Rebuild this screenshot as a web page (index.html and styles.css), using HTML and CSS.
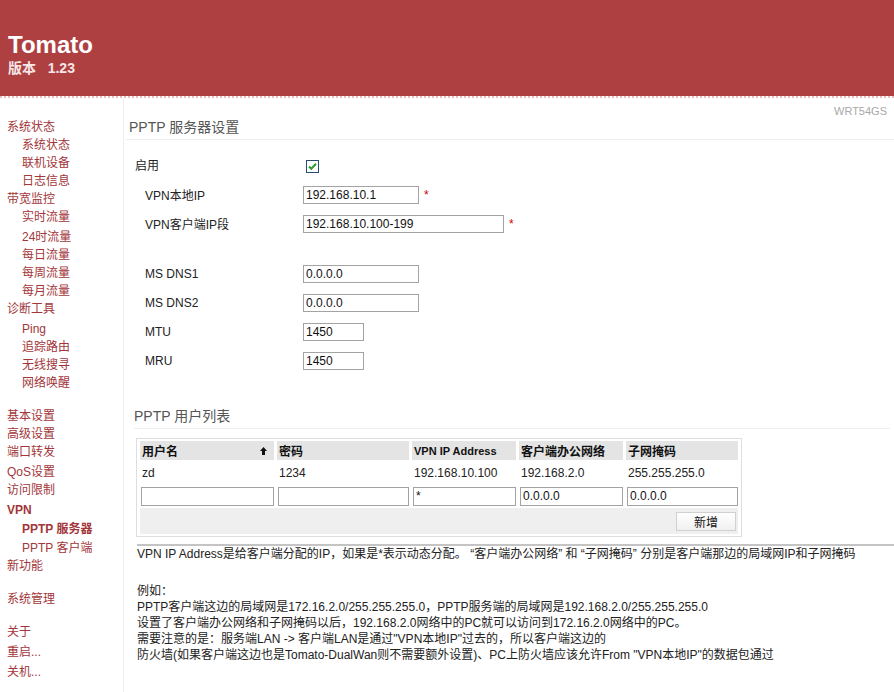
FILE: index.html
```html
<!DOCTYPE html>
<html lang="zh-CN">
<head>
    <meta charset="UTF-8">
    <title>[Tomato] VPN: PPTP 服务器</title>
    <link rel="stylesheet" href="styles.css">
</head>
<body>
    <div id="header">
        <div class="title">Tomato</div>
        <div class="version">版本&nbsp;&nbsp;&nbsp;1.23</div>
    </div>
    <div class="header-edge"></div>

    <div class="page">
        <div id="navi">
            <a class="top" href="#">系统状态</a>
            <a class="sub" href="#">系统状态</a>
            <a class="sub" href="#">联机设备</a>
            <a class="sub" href="#">日志信息</a>
            <a class="top" href="#">带宽监控</a>
            <a class="sub" href="#">实时流量</a>
            <a class="sub tall" href="#">24时流量</a>
            <a class="sub" href="#">每日流量</a>
            <a class="sub" href="#">每周流量</a>
            <a class="sub" href="#">每月流量</a>
            <a class="top" href="#">诊断工具</a>
            <a class="sub tall" href="#">Ping</a>
            <a class="sub" href="#">追踪路由</a>
            <a class="sub" href="#">无线搜寻</a>
            <a class="sub" href="#">网络唤醒</a>

            <a class="top gap" href="#">基本设置</a>
            <a class="top" href="#">高级设置</a>
            <a class="top" href="#">端口转发</a>
            <a class="top tall" href="#">QoS设置</a>
            <a class="top" href="#">访问限制</a>
            <a class="top tall active" href="#">VPN</a>
            <a class="sub half active" href="#">PPTP 服务器</a>
            <a class="sub half" href="#">PPTP 客户端</a>
            <a class="top" href="#">新功能</a>

            <a class="top gap" href="#">系统管理</a>

            <a class="top gap" href="#">关于</a>
            <a class="top tall" href="#">重启...</a>
            <a class="top tall" href="#">关机...</a>
        </div>

        <div id="content">
            <div class="ident">WRT54GS</div>

            <div class="section-title">PPTP 服务器设置</div>
            <div class="section">
                <div class="row row-enable">
                    <label class="lbl">启用</label>
                    <span class="check">
                        <svg width="13" height="13" viewBox="0 0 13 13">
                            <rect x="0.5" y="0.5" width="12" height="12" fill="#fff" stroke="#2a4d6e"/>
                            <path d="M3 6.5 L5.3 8.8 L10 3.8" fill="none" stroke="#2f9e2f" stroke-width="2"/>
                        </svg>
                    </span>
                </div>
                <div class="row">
                    <label class="lbl indent">VPN本地IP</label>
                    <input type="text" class="field w-ip" value="192.168.10.1"><span class="req">*</span>
                </div>
                <div class="row">
                    <label class="lbl indent">VPN客户端IP段</label>
                    <input type="text" class="field w-range" value="192.168.10.100-199"><span class="req">*</span>
                </div>
                <div class="spacer"></div>
                <div class="row">
                    <label class="lbl indent">MS DNS1</label>
                    <input type="text" class="field w-ip" value="0.0.0.0">
                </div>
                <div class="row">
                    <label class="lbl indent">MS DNS2</label>
                    <input type="text" class="field w-ip" value="0.0.0.0">
                </div>
                <div class="row">
                    <label class="lbl indent">MTU</label>
                    <input type="text" class="field w-num" value="1450">
                </div>
                <div class="row">
                    <label class="lbl indent">MRU</label>
                    <input type="text" class="field w-num" value="1450">
                </div>
            </div>

            <div class="section-title list-title">PPTP 用户列表</div>
            <table class="users">
                <tr>
                    <th class="c1">用户名
                        <svg class="sort" width="7" height="8" viewBox="0 0 7 8"><path d="M3.5 0 L7 4 H5 V8 H2 V4 H0 Z" fill="#111"/></svg>
                    </th>
                    <th class="c2">密码</th>
                    <th class="c3">VPN IP Address</th>
                    <th class="c4">客户端办公网络</th>
                    <th class="c5">子网掩码</th>
                </tr>
                <tr class="data">
                    <td>zd</td>
                    <td>1234</td>
                    <td>192.168.10.100</td>
                    <td>192.168.2.0</td>
                    <td>255.255.255.0</td>
                </tr>
                <tr class="edit">
                    <td><input type="text" class="cell-input"></td>
                    <td><input type="text" class="cell-input"></td>
                    <td><input type="text" class="cell-input" value="*"></td>
                    <td><input type="text" class="cell-input" value="0.0.0.0"></td>
                    <td><input type="text" class="cell-input" value="0.0.0.0"></td>
                </tr>
                <tr class="foot">
                    <td colspan="5"><button type="button" class="add-btn">新增</button></td>
                </tr>
            </table>

            <div class="notes">
                <div>VPN IP Address是给客户端分配的IP，如果是*表示动态分配。 “客户端办公网络” 和 “子网掩码” 分别是客户端那边的局域网IP和子网掩码</div>
                <div class="example">
                    例如：<br>
                    PPTP客户端这边的局域网是172.16.2.0/255.255.255.0，PPTP服务端的局域网是192.168.2.0/255.255.255.0<br>
                    设置了客户端办公网络和子网掩码以后，192.168.2.0网络中的PC就可以访问到172.16.2.0网络中的PC。<br>
                    需要注意的是：服务端LAN -&gt; 客户端LAN是通过"VPN本地IP"过去的，所以客户端这边的<br>
                    防火墙(如果客户端这边也是Tomato-DualWan则不需要额外设置)、PC上防火墙应该允许From "VPN本地IP"的数据包通过
                </div>
            </div>
        </div>
    </div>
</body>
</html>
```

FILE: styles.css
```css
body {
    margin: 0;
    font-family: "Liberation Sans", "Noto Sans CJK SC", sans-serif;
    font-size: 12px;
    color: #222;
    background-color: #fff;
    overflow: hidden;
}

/* red banner */
#header {
    height: 96px;
    box-sizing: border-box;
    padding: 31px 0 0 8px;
    background-color: #ae4042;
    color: #fff;
}

#header .title {
    font-size: 24px;
    font-weight: bold;
    line-height: 28px;
}

#header .version {
    margin-top: 1px;
    font-size: 14px;
    font-weight: bold;
    line-height: 16px;
    color: #f6e6e6;
}

.header-edge {
    height: 2px;
    background: repeating-linear-gradient(90deg, #e7bdbd 0 2px, #fff 2px 4px);
}

.page {
    display: flex;
}

/* left menu */
#navi {
    width: 124px;
    min-height: 594px;
    padding-top: 20px;
    box-sizing: border-box;
    border-right: 1px solid #eeeeee;
    flex-shrink: 0;
}

#navi a {
    display: block;
    line-height: 18px;
    color: #a2363a;
    text-decoration: none;
    white-space: nowrap;
}

#navi a.top {
    padding-left: 7px;
}

#navi a.sub {
    padding-left: 22px;
}

#navi a.tall {
    padding-top: 2px;
}

#navi a.half {
    padding-top: 1px;
}

#navi a.gap {
    margin-top: 15px;
}

#navi a.active {
    font-weight: bold;
}

/* right side */
#content {
    flex: 1;
    min-width: 0;
}

.ident {
    margin-top: 6px;
    padding-right: 7px;
    text-align: right;
    font-size: 11px;
    line-height: 14px;
    color: #a8a8a8;
}

.section-title {
    margin-left: 2px;
    padding: 0 0 3px 3px;
    font-size: 14px;
    line-height: 18px;
    color: #555;
    border-bottom: 1px solid #eeeeee;
}

.section {
    padding: 8px 0 0 11px;
}

.row {
    display: flex;
    align-items: center;
    height: 29px;
}

.row-enable {
    height: 32px;
}

.lbl {
    width: 168px;
    flex-shrink: 0;
    box-sizing: border-box;
    color: #222;
}

.lbl.indent {
    padding-left: 10px;
}

.check {
    display: flex;
    margin: 4px 0 0 3px;
}

.spacer {
    height: 21px;
}

.field {
    height: 18px;
    box-sizing: border-box;
    margin: 0;
    padding: 0 2px;
    border: 1px solid #a3a3a3;
    font-family: "Liberation Sans", sans-serif;
    font-size: 12px;
    color: #111;
    background-color: #fff;
}

.w-ip {
    width: 116px;
}

.w-range {
    width: 201px;
}

.w-num {
    width: 61px;
}

.req {
    margin-left: 5px;
    color: #d40000;
}

.list-title {
    margin: 32px 4px 0 10px;
    padding-left: 0;
}

/* users table */
table.users {
    margin: 9px 0 0 12px;
    border: 1px solid #dedede;
    border-spacing: 3px 2px;
}

.users th,
.users td {
    padding: 0 0 0 2px;
    text-align: left;
    white-space: nowrap;
}

.users th {
    height: 19px;
    font-size: 12px;
    background-color: #e4e4e4;
    color: #111;
}

.users th.c3 {
    font-size: 11px;
}

.users .c1 { width: 132px; position: relative; }
.users .c2 { width: 130px; }
.users .c3 { width: 102px; }
.users .c4 { width: 102px; }
.users .c5 { width: 110px; }

.users .sort {
    position: absolute;
    right: 7px;
    top: 6px;
}

.users tr.data td {
    height: 22px;
    color: #222;
}

.users tr.edit td {
    height: 20px;
    padding: 0 0 0 1px;
}

.cell-input {
    width: 100%;
    height: 19px;
    box-sizing: border-box;
    margin: 0;
    padding: 0 2px;
    border: 1px solid #a3a3a3;
    font-family: "Liberation Sans", sans-serif;
    font-size: 12px;
    color: #111;
}

.users tr.foot td {
    height: 26px;
    padding: 0 2px 0 0;
    text-align: right;
    background-color: #efefef;
}

.add-btn {
    width: 60px;
    height: 19px;
    padding: 0;
    border: 1px solid #d0d0d0;
    background: linear-gradient(#ffffff, #f0f0f0);
    font-family: "Liberation Sans", "Noto Sans CJK SC", sans-serif;
    font-size: 12px;
    color: #111;
}

.notes {
    margin: 7px 0 0 13px;
    border-top: 2px solid #c4c4c4;
    line-height: 16px;
    color: #222;
    white-space: nowrap;
}

.notes .example {
    margin-top: 21px;
}
```
